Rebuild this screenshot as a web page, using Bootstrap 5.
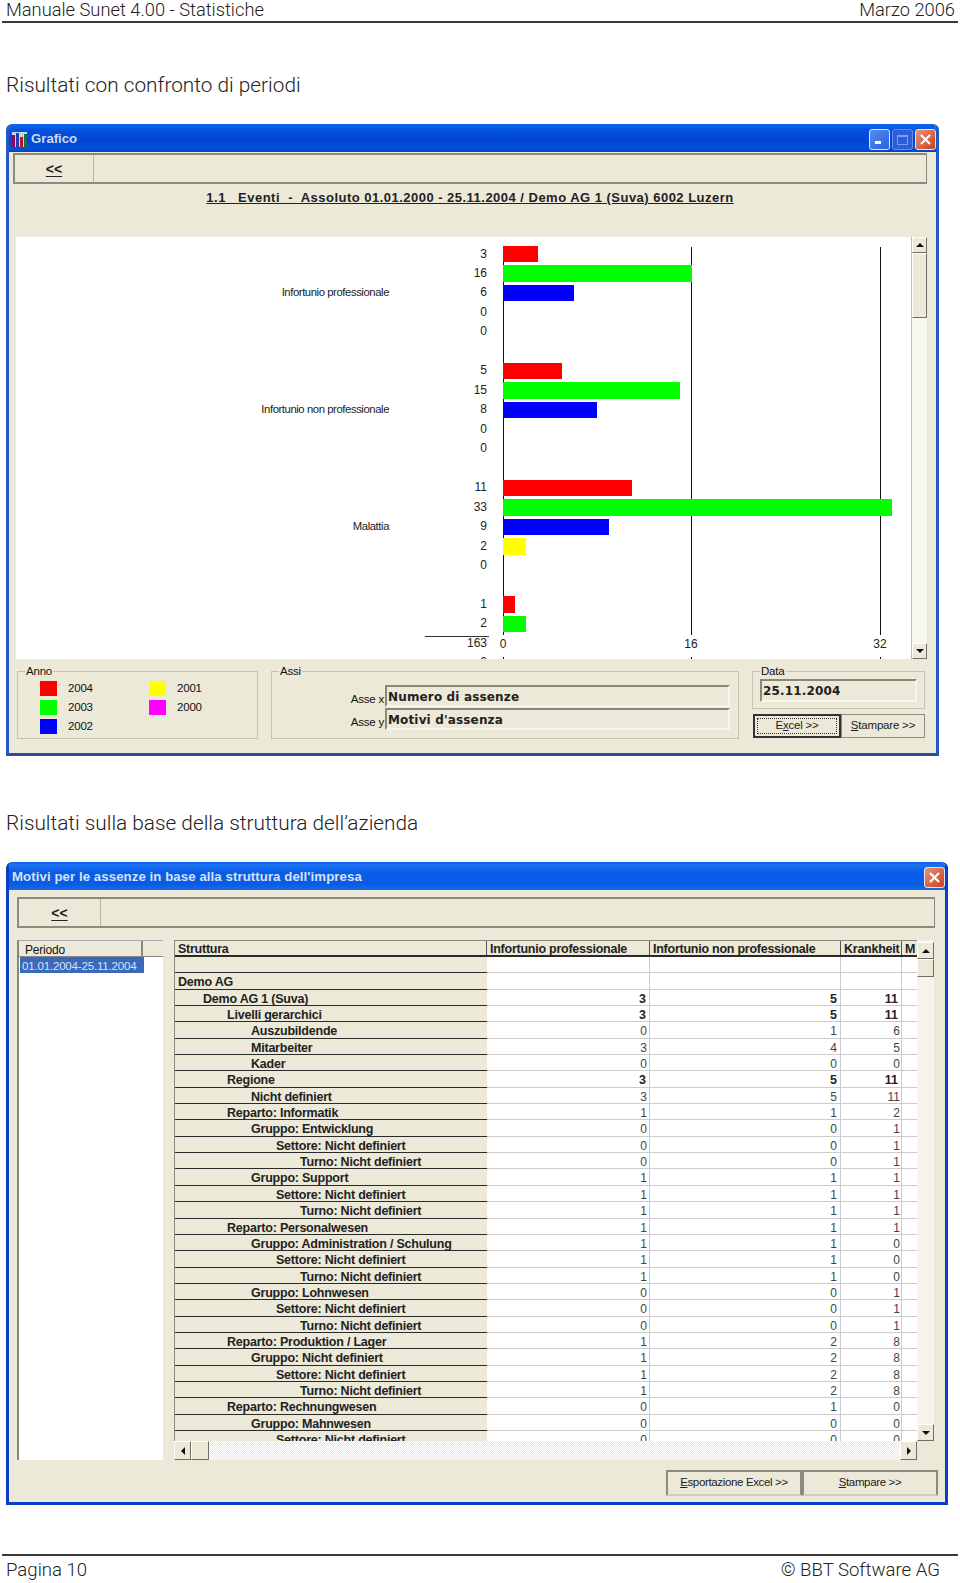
<!DOCTYPE html>
<html lang="it">
<head>
<meta charset="utf-8">
<title>Manuale Sunet 4.00 - Statistiche</title>
<link rel="stylesheet" href="https://cdn.jsdelivr.net/npm/bootstrap@5.3.0/dist/css/bootstrap.min.css">
<style>
html,body{margin:0;background:#fff}
body{width:960px;height:1583px;overflow:hidden;font-family:"Roboto","Liberation Sans",sans-serif;font-weight:300;color:#222}
.pg-head{height:23px;margin:0 2px;padding:0 3px 0 4px;border-bottom:2px solid #3a3a3a;font-size:18.3px;line-height:19px}
.sec-title{margin:0 0 0 6px;font-size:20.8px;font-weight:300;line-height:26px;color:#222}
.t1{padding-top:49px;height:101px}
.t2{padding-top:54px;height:106px}
.pg-foot{position:relative;height:29px;margin:0 2px;padding:2px 18px 0 4px;border-top:2px solid #3a3a3a;font-size:18.6px;line-height:24px}
.foot-wrap{padding-top:49px}

.xpwin{margin-left:6px;background:#ece9d8;border:3px solid #0a3fc4;border-top:0;border-radius:6px 6px 0 0;font-family:"Liberation Sans",sans-serif;font-weight:400;color:#111;overflow:hidden}
.w1{width:933px;height:632px;border-color:#2158c4 #2158c4 #2c4c9c}
.w2{width:942px;height:643px}
.xptitle{height:28px;margin:0 -3px;padding:2px 3px 0 6px;background:linear-gradient(#0a5fe0 0,#0a63ee 6%,#0553df 20%,#0047d0 60%,#0550dc 88%,#0342b8 100%);color:#cddaf4;font-weight:700;font-size:13.2px;line-height:26px}
.w2 .xptitle{padding-left:6px;letter-spacing:.09px;color:#d6e2f8;background:linear-gradient(#0a5fe0 0,#1a74f0 10%,#0a5ce8 35%,#0a5ce4 80%,#1a6ce8 100%)}
.xpbtn{width:21px;height:21px;border-radius:3px;border:1px solid #dfe8fa;display:flex;align-items:center;justify-content:center;flex:none}
.xpmin{background:linear-gradient(135deg,#5a8cf0,#2a5fdc)}
.xpmax{background:#2c5edc;border-color:#6a8fe8;margin:0 2px}
.xpclose{background:linear-gradient(135deg,#e8937a,#c9431d)}
.toolbar{height:31px;background:#ece9d8;border:2px solid #8d8b7d;border-right-width:1px}
.tb-btn{width:79px;height:100%;border:0;border-right:1px solid #b8b5a4;background:#ece9d8;font-weight:700;font-size:14px;line-height:1;padding:0;color:#222;border-radius:0}
.tb-btn u{text-underline-offset:2px}
.w1 .wb{padding:1px 9px 0 4px}
.doc-title{height:53px;padding-top:6px;text-align:center;font-weight:700;font-size:13px;letter-spacing:.48px;text-decoration:underline;white-space:pre;color:#222;line-height:16px}
.chart{margin-left:3px;height:422px;background:#fff;position:relative;overflow:hidden}
.plot{padding-top:7.5px;position:relative}
.crow{position:relative;z-index:1;height:19.47px;line-height:19.47px;font-size:12px;color:#222;display:flex;align-items:center}
.glabel{width:373px;text-align:right;font-size:11.3px;letter-spacing:-.42px;flex:none}
.cnum{width:98px;text-align:right;flex:none}
.barbox{margin-left:16px;height:16.5px;flex:none}
.ticklab{position:absolute;transform:translateX(-50%);top:1px;background:#fff}
.ax{position:absolute;width:1px;background:#111;top:10px;height:390px;z-index:0}
.ax2{top:420px;height:2px}
.rule163{position:absolute;left:409px;top:399px;width:64px;height:1px;background:#333}
.vs{width:16px;flex:none;background:#f8f7f0;display:flex;flex-direction:column;justify-content:space-between;border-left:1px solid #bbb}
.vsbtn{height:16px;background:#ece9d8;border:1px solid;border-color:#fff #716f64 #716f64 #fff;display:flex;align-items:center;justify-content:center;flex:none}
.hsbtn{width:17px;height:19px;background:#ece9d8;border:1px solid;border-color:#fff #716f64 #716f64 #fff;display:flex;align-items:center;justify-content:center;flex:none}
.thumb{background:#ece9d8;border:1px solid;border-color:#fff #716f64 #716f64 #fff}
.gb{border:1px solid #c5c2b2;border-radius:0;margin:0;padding:0;position:relative;font-size:11.5px;letter-spacing:-.2px}
.gb legend{float:none;width:auto;font-size:11.5px;line-height:12px;margin:0 0 0 7px;padding:0 1px}
.row-bottom{margin:6px 0 0 4px;gap:13px}
.anno{width:241px;height:74px}
.assi{width:468px;height:74px}
.legendgrid{display:grid;grid-template-columns:109px 1fr;padding:2px 0 0 22px}
.lg{display:flex;align-items:center;height:19px;gap:11px;line-height:19px}
.sw{width:17px;height:15px;display:block;flex:none}
.assirow{display:flex;align-items:flex-end;justify-content:flex-end;padding-right:8px;gap:1px}
.assirow span{line-height:16px}
.assirow+.assirow{margin-top:1px}
.assi-first{margin-top:8px}
.fld{border:2px solid;border-color:#8a8878 #f7f5ec #f7f5ec #8a8878;background:#ece9d8;font-family:"DejaVu Sans",sans-serif;font-weight:700;font-size:12px;letter-spacing:.15px;color:#222;line-height:20px;padding:0 0 0 1px;white-space:nowrap}
.fa{width:345px;height:22px}
.datab{width:173px;height:44px}
.datafld{margin:2px 0 0 7px;width:157px;height:23px;line-height:21px}
.sidecol{width:173px}
.btnpair{display:flex;margin:5px 0 0 1px}
.btnxp{background:#ece9d8;border:1px solid #8d8b7d;border-radius:0;font-size:11.5px;letter-spacing:-.2px;padding:0;color:#222;height:24px;line-height:1}
.b-ex{width:88px;border:2px solid #333;padding:2px}
.b-ex span{display:flex;align-items:center;justify-content:center;height:100%;border:1px dotted #333}
.b-st{width:84px}
.w2 .wb{padding:7px 10px 0 8px}
.w2 .toolbar{height:31px;width:918px}
.w2 .tb-btn{width:82px}
.panes{margin-top:12px;gap:11px;height:520px}
.plist{width:146px;background:#fff;border-left:2px solid #8a8878;border-top:1px solid #aaa;flex:none;font-size:12px}
.phead{height:16px;background:#ece9d8;display:flex;border-bottom:1px solid #888;line-height:16px}
.phead div:first-child{width:124px;padding:1px 0 0 6px;border-right:2px solid #8a8878;letter-spacing:-.2px}
.psel{width:124px;height:16px;margin-left:1px;background:#3a69bb;color:#d4e1f6;line-height:16px;padding:1px 0 0 2px;letter-spacing:-.22px;font-size:11.6px;white-space:nowrap}
.gridpane{width:760px;flex:none;background:#ece9d8}
.gridmain{height:501px;display:flex}
.gridbody{width:743px;height:501px;overflow:hidden;background:#fff;border-left:1px solid #8a8878;flex:none}
.ghead{height:17px;display:flex;background:#ece9d8;font-weight:700;font-size:12.5px;letter-spacing:-.25px;line-height:16px;padding-top:1px;border-bottom:2px solid #2a2a2a;border-top:1px solid #8a8878;color:#222;white-space:nowrap;overflow:hidden}
.ghead>div{padding-left:3px;border-right:1px solid #555;margin-top:-1px}
.grow{height:16.35px;display:flex;line-height:15px;font-size:12px;color:#444}
.c0,.c1,.c2,.c3,.c4{padding-top:2px}
.c0{width:312px;flex:none;background:#ece9d8;border-bottom:1.5px solid #2a2a2a;font-weight:700;font-size:12.5px;letter-spacing:-.22px;color:#222;white-space:nowrap}
.c1,.c2,.c3,.c4{flex:none;border-right:1.5px solid #ccc;border-bottom:1.5px solid #ccc;text-align:right;padding-right:2px}
.c1{width:163px}
.c2{width:191px;padding-right:3px}
.c3{width:61px;padding-right:1px}
.c4{width:15px;border-right:0}
.grow.tot .c1,.grow.tot .c2,.grow.tot .c3{font-weight:700;font-size:12.5px;color:#222;padding-right:3px}
.grow.tot .c3{padding-right:3px}
.l1{padding-left:3px}.l2{padding-left:28px}.l3{padding-left:52px}.l4{padding-left:76px}.l5{padding-left:101px}.l6{padding-left:125px}
.vs2{width:17px;flex:none;background:#f5f3ea;display:flex;flex-direction:column;justify-content:space-between;padding-top:2px}
.vs2 .vsbtn{height:17px}
.hs{width:743px;height:19px;display:flex;justify-content:space-between;background:repeating-conic-gradient(#fff 0 25%,#ece9d8 0 50%) 0 0/2px 2px}
.hs .thumb{width:18px}
.btnrow{justify-content:flex-end;margin:10px -3px 0 0}
.btnxp2{height:26px;width:136px;background:#ece9d8;border:2px solid #8d8b7d;border-bottom-color:#d0cdbc;border-radius:0;padding:0;font-size:11.5px;letter-spacing:-.35px;color:#222;line-height:1}
.arrow-u{width:0;height:0;border:4px solid transparent;border-top:0;border-bottom:4px solid #111}
.arrow-d{width:0;height:0;border:4px solid transparent;border-bottom:0;border-top:4px solid #111}
.arrow-l{width:0;height:0;border:4px solid transparent;border-left:0;border-right:4px solid #111}
.arrow-r{width:0;height:0;border:4px solid transparent;border-right:0;border-left:4px solid #111}
</style>
</head>
<body>
<div class="pg-head d-flex justify-content-between"><span>Manuale Sunet 4.00 - Statistiche</span><span>Marzo 2006</span></div>
<div class="t1"><h2 class="sec-title">Risultati con confronto di periodi</h2></div>

<div class="xpwin w1">
  <div class="xptitle d-flex align-items-center">
    <svg width="15" height="15" viewBox="0 0 15 15" class="me-1 flex-none"><rect width="15" height="15" fill="#c8d4ee"/><rect x="0" y="3" width="3" height="12" fill="#8a0a60"/><rect x="4" y="1" width="3" height="14" fill="#1f3fae"/><rect x="8" y="5" width="3" height="10" fill="#c01030"/><rect x="12" y="2" width="3" height="13" fill="#107050"/></svg>
    <span class="flex-grow-1">Grafico</span>
    <span class="xpbtn xpmin"><svg width="11" height="11" viewBox="0 0 11 11"><rect x="1" y="7" width="6" height="3" fill="#fff"/></svg></span>
    <span class="xpbtn xpmax"><svg width="11" height="11" viewBox="0 0 11 11"><rect x=".5" y="1.5" width="10" height="9" fill="none" stroke="#7d9eee"/><rect x="0" y="1" width="11" height="2" fill="#7d9eee"/></svg></span>
    <span class="xpbtn xpclose"><svg width="13" height="13" viewBox="0 0 13 13"><path d="M2 2l9 9M11 2l-9 9" stroke="#fff" stroke-width="2.2"/></svg></span>
  </div>
  <div class="wb">
    <div class="toolbar"><button type="button" class="btn tb-btn"><u>&lt;&lt;</u></button></div>
    <div class="doc-title">1.1   Eventi  -  Assoluto 01.01.2000 - 25.11.2004 / Demo AG 1 (Suva) 6002 Luzern</div>
    <div class="chart d-flex">
      <div class="flex-grow-1 plot">
        <div class="ax" style="left:487px"></div><div class="ax" style="left:675px"></div><div class="ax" style="left:864px"></div>
        <div class="ax ax2" style="left:487px"></div><div class="ax ax2" style="left:675px"></div><div class="ax ax2" style="left:864px"></div>
        <div class="rule163"></div>
        <div class="crow"><div class="glabel"></div><div class="cnum">3</div><div class="barbox" style="width:35px;background:#f00"></div></div>
        <div class="crow"><div class="glabel"></div><div class="cnum">16</div><div class="barbox" style="width:189px;background:#0f0"></div></div>
        <div class="crow"><div class="glabel">Infortunio professionale</div><div class="cnum">6</div><div class="barbox" style="width:71px;background:#00f"></div></div>
        <div class="crow"><div class="glabel"></div><div class="cnum">0</div></div>
        <div class="crow"><div class="glabel"></div><div class="cnum">0</div></div>
        <div class="crow"></div>
        <div class="crow"><div class="glabel"></div><div class="cnum">5</div><div class="barbox" style="width:59px;background:#f00"></div></div>
        <div class="crow"><div class="glabel"></div><div class="cnum">15</div><div class="barbox" style="width:177px;background:#0f0"></div></div>
        <div class="crow"><div class="glabel">Infortunio non professionale</div><div class="cnum">8</div><div class="barbox" style="width:94px;background:#00f"></div></div>
        <div class="crow"><div class="glabel"></div><div class="cnum">0</div></div>
        <div class="crow"><div class="glabel"></div><div class="cnum">0</div></div>
        <div class="crow"></div>
        <div class="crow"><div class="glabel"></div><div class="cnum">11</div><div class="barbox" style="width:129px;background:#f00"></div></div>
        <div class="crow"><div class="glabel"></div><div class="cnum">33</div><div class="barbox" style="width:389px;background:#0f0"></div></div>
        <div class="crow"><div class="glabel">Malattia</div><div class="cnum">9</div><div class="barbox" style="width:106px;background:#00f"></div></div>
        <div class="crow"><div class="glabel"></div><div class="cnum">2</div><div class="barbox" style="width:23px;background:#ff0"></div></div>
        <div class="crow"><div class="glabel"></div><div class="cnum">0</div></div>
        <div class="crow"></div>
        <div class="crow"><div class="glabel"></div><div class="cnum">1</div><div class="barbox" style="width:12px;background:#f00"></div></div>
        <div class="crow"><div class="glabel"></div><div class="cnum">2</div><div class="barbox" style="width:23px;background:#0f0"></div></div>
        <div class="crow"><div class="glabel"></div><div class="cnum">163</div>
          <span class="ticklab" style="left:487px">0</span><span class="ticklab" style="left:675px">16</span><span class="ticklab" style="left:864px">32</span></div>
        <div class="crow"><div class="glabel"></div><div class="cnum">0</div></div>
      </div>
      <div class="vs">
        <div><div class="vsbtn"><i class="arrow-u"></i></div><div class="thumb" style="height:65px"></div></div>
        <div class="vsbtn"><i class="arrow-d"></i></div>
      </div>
    </div>
    <div class="d-flex row-bottom">
      <fieldset class="gb anno"><legend>Anno</legend>
        <div class="legendgrid">
          <div class="lg"><i class="sw" style="background:#f00"></i>2004</div><div class="lg"><i class="sw" style="background:#ff0"></i>2001</div>
          <div class="lg"><i class="sw" style="background:#0f0"></i>2003</div><div class="lg"><i class="sw" style="background:#f0f"></i>2000</div>
          <div class="lg"><i class="sw" style="background:#00f"></i>2002</div>
        </div>
      </fieldset>
      <fieldset class="gb assi"><legend>Assi</legend>
        <div class="assirow assi-first"><span>Asse x</span><div class="fld fa">Numero di assenze</div></div>
        <div class="assirow"><span>Asse y</span><div class="fld fa">Motivi d'assenza</div></div>
      </fieldset>
      <div class="sidecol">
        <fieldset class="gb datab"><legend>Data</legend><div class="fld datafld">25.11.2004</div></fieldset>
        <div class="btnpair">
          <button type="button" class="btn btnxp b-ex"><span>E<u>x</u>cel &gt;&gt;</span></button>
          <button type="button" class="btn btnxp b-st"><u>S</u>tampare &gt;&gt;</button>
        </div>
      </div>
    </div>
  </div>
</div>

<div class="t2"><h2 class="sec-title">Risultati sulla base della struttura dell’azienda</h2></div>

<div class="xpwin w2">
  <div class="xptitle d-flex align-items-center">
    <span class="flex-grow-1">Motivi per le assenze in base alla struttura dell'impresa</span>
    <span class="xpbtn xpclose"><svg width="13" height="13" viewBox="0 0 13 13"><path d="M2 2l9 9M11 2l-9 9" stroke="#fff" stroke-width="2.2"/></svg></span>
  </div>
  <div class="wb">
    <div class="toolbar"><button type="button" class="btn tb-btn"><u>&lt;&lt;</u></button></div>
    <div class="d-flex panes">
      <div class="plist">
        <div class="phead"><div>Periodo</div><div></div></div>
        <div class="psel">01.01.2004-25.11.2004</div>
      </div>
      <div class="gridpane">
        <div class="gridmain">
          <div class="gridbody">
            <div class="ghead"><div style="width:312px">Struttura</div><div style="width:163px">Infortunio professionale</div><div style="width:191px">Infortunio non professionale</div><div style="width:61px">Krankheit</div><div style="width:15px;border:0">M</div></div>
            <div class="grow"><div class="c0 l1"></div><div class="c1"></div><div class="c2"></div><div class="c3"></div><div class="c4"></div></div>
            <div class="grow"><div class="c0 l1">Demo AG</div><div class="c1"></div><div class="c2"></div><div class="c3"></div><div class="c4"></div></div>
            <div class="grow tot"><div class="c0 l2">Demo AG 1 (Suva)</div><div class="c1">3</div><div class="c2">5</div><div class="c3">11</div><div class="c4"></div></div>
            <div class="grow tot"><div class="c0 l3">Livelli gerarchici</div><div class="c1">3</div><div class="c2">5</div><div class="c3">11</div><div class="c4"></div></div>
            <div class="grow"><div class="c0 l4">Auszubildende</div><div class="c1">0</div><div class="c2">1</div><div class="c3">6</div><div class="c4"></div></div>
            <div class="grow"><div class="c0 l4">Mitarbeiter</div><div class="c1">3</div><div class="c2">4</div><div class="c3">5</div><div class="c4"></div></div>
            <div class="grow"><div class="c0 l4">Kader</div><div class="c1">0</div><div class="c2">0</div><div class="c3">0</div><div class="c4"></div></div>
            <div class="grow tot"><div class="c0 l3">Regione</div><div class="c1">3</div><div class="c2">5</div><div class="c3">11</div><div class="c4"></div></div>
            <div class="grow"><div class="c0 l4">Nicht definiert</div><div class="c1">3</div><div class="c2">5</div><div class="c3">11</div><div class="c4"></div></div>
            <div class="grow"><div class="c0 l3">Reparto: Informatik</div><div class="c1">1</div><div class="c2">1</div><div class="c3">2</div><div class="c4"></div></div>
            <div class="grow"><div class="c0 l4">Gruppo: Entwicklung</div><div class="c1">0</div><div class="c2">0</div><div class="c3">1</div><div class="c4"></div></div>
            <div class="grow"><div class="c0 l5">Settore: Nicht definiert</div><div class="c1">0</div><div class="c2">0</div><div class="c3">1</div><div class="c4"></div></div>
            <div class="grow"><div class="c0 l6">Turno: Nicht definiert</div><div class="c1">0</div><div class="c2">0</div><div class="c3">1</div><div class="c4"></div></div>
            <div class="grow"><div class="c0 l4">Gruppo: Support</div><div class="c1">1</div><div class="c2">1</div><div class="c3">1</div><div class="c4"></div></div>
            <div class="grow"><div class="c0 l5">Settore: Nicht definiert</div><div class="c1">1</div><div class="c2">1</div><div class="c3">1</div><div class="c4"></div></div>
            <div class="grow"><div class="c0 l6">Turno: Nicht definiert</div><div class="c1">1</div><div class="c2">1</div><div class="c3">1</div><div class="c4"></div></div>
            <div class="grow"><div class="c0 l3">Reparto: Personalwesen</div><div class="c1">1</div><div class="c2">1</div><div class="c3">1</div><div class="c4"></div></div>
            <div class="grow"><div class="c0 l4">Gruppo: Administration / Schulung</div><div class="c1">1</div><div class="c2">1</div><div class="c3">0</div><div class="c4"></div></div>
            <div class="grow"><div class="c0 l5">Settore: Nicht definiert</div><div class="c1">1</div><div class="c2">1</div><div class="c3">0</div><div class="c4"></div></div>
            <div class="grow"><div class="c0 l6">Turno: Nicht definiert</div><div class="c1">1</div><div class="c2">1</div><div class="c3">0</div><div class="c4"></div></div>
            <div class="grow"><div class="c0 l4">Gruppo: Lohnwesen</div><div class="c1">0</div><div class="c2">0</div><div class="c3">1</div><div class="c4"></div></div>
            <div class="grow"><div class="c0 l5">Settore: Nicht definiert</div><div class="c1">0</div><div class="c2">0</div><div class="c3">1</div><div class="c4"></div></div>
            <div class="grow"><div class="c0 l6">Turno: Nicht definiert</div><div class="c1">0</div><div class="c2">0</div><div class="c3">1</div><div class="c4"></div></div>
            <div class="grow"><div class="c0 l3">Reparto: Produktion / Lager</div><div class="c1">1</div><div class="c2">2</div><div class="c3">8</div><div class="c4"></div></div>
            <div class="grow"><div class="c0 l4">Gruppo: Nicht definiert</div><div class="c1">1</div><div class="c2">2</div><div class="c3">8</div><div class="c4"></div></div>
            <div class="grow"><div class="c0 l5">Settore: Nicht definiert</div><div class="c1">1</div><div class="c2">2</div><div class="c3">8</div><div class="c4"></div></div>
            <div class="grow"><div class="c0 l6">Turno: Nicht definiert</div><div class="c1">1</div><div class="c2">2</div><div class="c3">8</div><div class="c4"></div></div>
            <div class="grow"><div class="c0 l3">Reparto: Rechnungwesen</div><div class="c1">0</div><div class="c2">1</div><div class="c3">0</div><div class="c4"></div></div>
            <div class="grow"><div class="c0 l4">Gruppo: Mahnwesen</div><div class="c1">0</div><div class="c2">0</div><div class="c3">0</div><div class="c4"></div></div>
            <div class="grow"><div class="c0 l5">Settore: Nicht definiert</div><div class="c1">0</div><div class="c2">0</div><div class="c3">0</div><div class="c4"></div></div>
          </div>
          <div class="vs2">
            <div><div class="vsbtn"><i class="arrow-u"></i></div><div class="thumb" style="height:18px"></div></div>
            <div class="vsbtn"><i class="arrow-d"></i></div>
          </div>
        </div>
        <div class="hs">
          <div class="d-flex"><div class="hsbtn"><i class="arrow-l"></i></div><div class="thumb"></div></div>
          <div class="hsbtn"><i class="arrow-r"></i></div>
        </div>
      </div>
    </div>
    <div class="d-flex btnrow">
      <button type="button" class="btn btnxp2"><u>E</u>sportazione Excel &gt;&gt;</button>
      <button type="button" class="btn btnxp2"><u>S</u>tampare &gt;&gt;</button>
    </div>
  </div>
</div>

<div class="foot-wrap"><div class="pg-foot d-flex justify-content-between"><span>Pagina 10</span><span>© BBT Software AG</span></div></div>
</body>
</html>
